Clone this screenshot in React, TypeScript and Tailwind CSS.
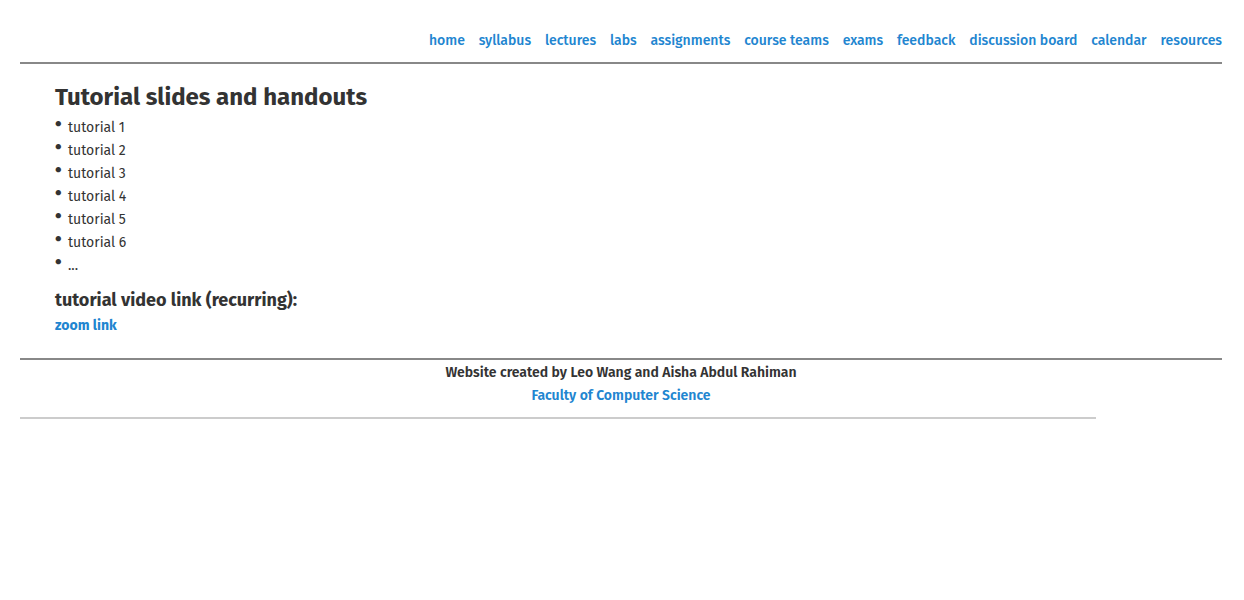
import React from "react";

const nav = ["home", "syllabus", "lectures", "labs", "assignments", "course teams", "exams", "feedback", "discussion board", "calendar", "resources"];
const items = ["tutorial 1", "tutorial 2", "tutorial 3", "tutorial 4", "tutorial 5", "tutorial 6", "..."];

export default function App() {
  return (
    <div className="min-h-[600px] bg-white text-[#333333] pl-[20px] pr-[22px]" style={{ fontFamily: "'Fira Sans', Lato, 'Noto Sans', sans-serif" }}>
      <header className="pt-[31px] border-b-2 border-[#888888]">
        <nav className="flex justify-end gap-[13.8px] h-[31px] text-[14px] leading-[20px] font-medium">
          {nav.map((n) => (
            <a key={n} className="text-[#2185d0]">{n}</a>
          ))}
        </nav>
      </header>
      <main className="pl-[35px] pt-[19px] pb-[22px] border-b-2 border-[#888888]">
        <h1 className="text-[24px] leading-[28px] font-bold">Tutorial slides and handouts</h1>
        <ul className="mt-[5px] text-[14px]">
          {items.map((t) => (
            <li key={t} className="flex items-start h-[23px] leading-[23px]">
              <span className="w-[13px] text-[11px] leading-[16px]">●</span>
              <span>{t}</span>
            </li>
          ))}
        </ul>
        <h2 className="mt-[11px] text-[18px] leading-[24px] font-bold">tutorial video link (recurring):</h2>
        <a className="block mt-[4px] text-[14px] leading-[20px] font-bold text-[#2185d0]">zoom link</a>
      </main>
      <footer className="w-[1076px] border-b-2 border-[#cccccc] pt-[3px] pb-[11px]">
        <p className="w-[1202px] text-center text-[14px] leading-[20px] font-semibold">Website created by Leo Wang and Aisha Abdul Rahiman</p>
        <p className="w-[1202px] mt-[3px] text-center text-[14px] leading-[20px] font-semibold text-[#2185d0]">Faculty of Computer Science</p>
      </footer>
    </div>
  );
}
